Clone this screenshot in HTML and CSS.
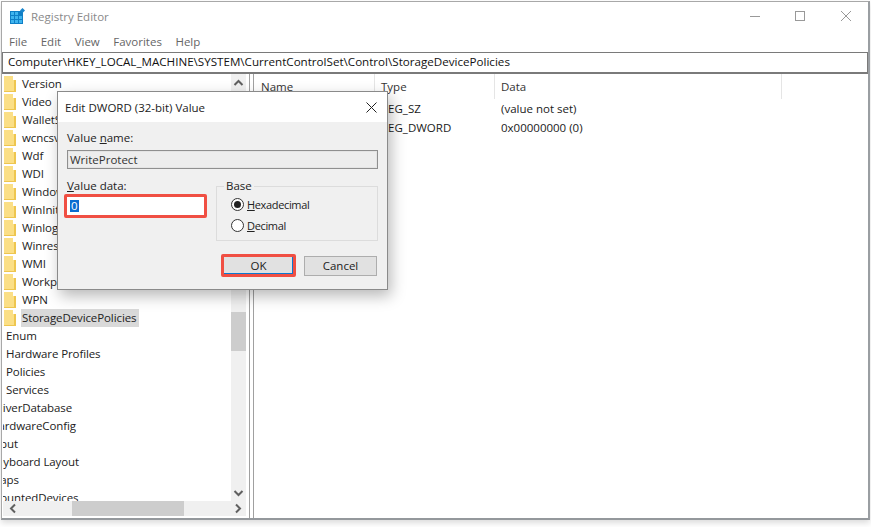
FILE: index.html
```html
<!DOCTYPE html>
<html lang="en">
<head>
<meta charset="utf-8">
<title>Registry Editor</title>
<link rel="stylesheet" href="styles.css">
</head>
<body>
<div class="window">
  <header class="titlebar">
    <svg class="appicon" width="16" height="16" viewBox="0 0 16 16">
      <rect x="0" y="3" width="13" height="13" fill="#0f7fc6"/>
      <g fill="#3fb4ee">
        <rect x="1" y="4" width="3" height="3"/><rect x="5" y="4" width="3" height="3"/>
        <rect x="1" y="8" width="3" height="3"/><rect x="5" y="8" width="3" height="3"/><rect x="9" y="8" width="3" height="3"/>
        <rect x="1" y="12" width="3" height="3"/><rect x="5" y="12" width="3" height="3"/><rect x="9" y="12" width="3" height="3"/>
      </g>
      <path d="M12.5 0l2.5 2.5-2.5 2.5-2.5-2.5z" fill="#1a86cc"/>
    </svg>
    <span class="apptitle">Registry Editor</span>
    <div class="winctrls">
      <svg width="11" height="12" viewBox="0 0 11 12"><path d="M0 6.5h10" stroke="#999" fill="none"/></svg>
      <svg width="11" height="12" viewBox="0 0 11 12"><rect x=".5" y="1.5" width="9" height="9" stroke="#999" fill="none"/></svg>
      <svg width="11" height="12" viewBox="0 0 11 12"><path d="M1 1l10 10M11 1L1 11" stroke="#999" fill="none"/></svg>
    </div>
  </header>
  <nav class="menubar">
    <span>File</span><span>Edit</span><span>View</span><span>Favorites</span><span>Help</span>
  </nav>
  <div class="address">Computer\HKEY_LOCAL_MACHINE\SYSTEM\CurrentControlSet\Control\StorageDevicePolicies</div>
  <main class="panes">
    <section class="tree">
      <div class="tree-scroll">
        <ul class="tree-list">
          <li class="node"><i class="folder"></i><span>Version</span></li>
          <li class="node"><i class="folder"></i><span>Video</span></li>
          <li class="node"><i class="folder"></i><span>WalletService</span></li>
          <li class="node"><i class="folder"></i><span>wcncsvc</span></li>
          <li class="node"><i class="folder"></i><span>Wdf</span></li>
          <li class="node"><i class="folder"></i><span>WDI</span></li>
          <li class="node"><i class="folder"></i><span>Windows</span></li>
          <li class="node"><i class="folder"></i><span>WinInit</span></li>
          <li class="node"><i class="folder"></i><span>Winlogon</span></li>
          <li class="node"><i class="folder"></i><span>Winresume</span></li>
          <li class="node"><i class="folder"></i><span>WMI</span></li>
          <li class="node"><i class="folder"></i><span>WorkplaceJoin</span></li>
          <li class="node"><i class="folder"></i><span>WPN</span></li>
          <li class="node"><i class="folder"></i><span class="selected">StorageDevicePolicies</span></li>
          <li class="plain lvl1">Enum</li>
          <li class="plain lvl1">Hardware Profiles</li>
          <li class="plain lvl1">Policies</li>
          <li class="plain lvl1">Services</li>
          <li class="plain lvl2">DriverDatabase</li>
          <li class="plain lvl2">HardwareConfig</li>
          <li class="plain lvl2">Input</li>
          <li class="plain lvl2">Keyboard Layout</li>
          <li class="plain lvl2">Maps</li>
          <li class="plain lvl2">MountedDevices</li>
        </ul>
        <div class="vscroll">
          <svg class="arrow" width="15" height="17" viewBox="0 0 15 17"><path d="M3.5 11l4-4 4 4" stroke="#606060" stroke-width="2" fill="none"/></svg>
          <div class="vtrack"><div class="vthumb"></div></div>
          <svg class="arrow" width="15" height="17" viewBox="0 0 15 17"><path d="M3.5 7l4 4 4-4" stroke="#606060" stroke-width="2" fill="none"/></svg>
        </div>
      </div>
      <div class="hscroll">
        <svg class="harrow" width="17" height="15" viewBox="0 0 17 15"><path d="M12 3.5l-4 4 4 4" stroke="#606060" stroke-width="2" fill="none"/></svg>
        <div class="htrack"><div class="hthumb"></div></div>
        <svg class="harrow" width="17" height="15" viewBox="0 0 17 15"><path d="M7 3.5l4 4-4 4" stroke="#606060" stroke-width="2" fill="none"/></svg>
      </div>
    </section>
    <section class="values">
      <div class="vhead">
        <span class="col-name">Name</span><span class="col-type">Type</span><span class="col-data">Data</span>
      </div>
      <div class="vrow"><span class="col-name"></span><span class="col-type">REG_SZ</span><span class="col-data">(value not set)</span></div>
      <div class="vrow"><span class="col-name"></span><span class="col-type">REG_DWORD</span><span class="col-data">0x00000000 (0)</span></div>
    </section>
  </main>
</div>

<div class="dialog">
  <div class="dlg-title">
    <span>Edit DWORD (32-bit) Value</span>
    <svg width="11" height="11" viewBox="0 0 11 11"><path d="M.5.5l10 10M10.5.5l-10 10" stroke="#222" fill="none"/></svg>
  </div>
  <div class="dlg-body">
    <label class="lbl">Value <u>n</u>ame:</label>
    <div class="namebox">WriteProtect</div>
    <div class="dlg-mid">
      <div class="datacol">
        <label class="lbl"><u>V</u>alue data:</label>
        <div class="databox"><span class="sel">0</span></div>
      </div>
      <fieldset class="base">
        <legend>Base</legend>
        <div class="radio"><i class="dot on"></i><span><u>H</u>exadecimal</span></div>
        <div class="radio"><i class="dot"></i><span><u>D</u>ecimal</span></div>
      </fieldset>
    </div>
    <div class="dlg-btns">
      <div class="btn ok">OK</div>
      <div class="btn">Cancel</div>
    </div>
  </div>
</div>
</body>
</html>
```

FILE: styles.css
```css
* { box-sizing: border-box; }
html, body { margin: 0; padding: 0; height: 100%; overflow: hidden; background: #fff; }
body { font-family: "Open Sans", "Liberation Sans", sans-serif; font-size: 11.5px; color: #1a1a1a; position: relative; }

.window {
  width: 869px; height: 519px; margin: 1px 0 0 1px;
  border: 1px solid #a8a8a8; border-right: 2px solid #9a9ea2; border-bottom: 2px solid #94989c;
  box-shadow: 0 3px 6px rgba(0,0,0,.14);
  background: #fff; display: flex; flex-direction: column;
}
.titlebar { height: 27px; display: flex; align-items: center; padding: 1px 0 0 8px; flex: none; }
.appicon { flex: none; }
.apptitle { margin-left: 5px; color: #8a8a8a; }
.winctrls { margin-left: auto; display: flex; gap: 34px; padding-right: 17px; align-items: center; }
.menubar { height: 23px; display: flex; gap: 13.5px; padding: 1px 0 0 7px; align-items: center; color: #666; flex: none; }
.address {
  height: 22px; flex: none; border: 1px solid #7a7a7a; border-bottom-width: 2px;
  padding-left: 5px; line-height: 18px; color: #111; white-space: nowrap; font-size: 11.62px;
}
.panes { flex: 1; min-height: 0; display: flex; }
.tree { width: 248px; border-right: 1px solid #a0a0a0; display: flex; flex-direction: column; padding-left: 1px; flex: none; }
.tree-scroll { flex: 1; min-height: 0; display: flex; }
.tree-list { flex: 1; list-style: none; margin: 0; padding: 1px 0 0; overflow: hidden; min-width: 0; letter-spacing: -.1px; }
.node, .plain { height: 18px; line-height: 18px; white-space: nowrap; color: #222; display: flex; align-items: center; }
.folder {
  width: 12px; height: 16px; background: #fbdf86; border-right: 2px solid #eec64f; border-bottom: 1px solid #eec64f;
  margin-left: 1px; flex: none; display: block;
  clip-path: polygon(0 0, 75% 0, 75% 25%, 100% 25%, 100% 100%, 0 100%);
}
.node span { padding: 0 3px 0 1px; margin-left: 5px; height: 18px; }
.node .selected { background: #d9d9d9; }
.lvl1 { padding-left: 3px; }
.plain.lvl2 { margin-left: -13px; }
.vscroll { width: 15px; margin-right: 3px; background: #f0f0f0; display: flex; flex-direction: column; flex: none; }
.arrow { flex: none; }
.vtrack { flex: 1; position: relative; }
.vthumb { position: absolute; left: 0; right: 0; top: 221px; height: 39px; background: #cdcdcd; }
.hscroll { height: 15px; background: #f0f0f0; display: flex; align-items: center; flex: none; margin: 0 3px 2px 0; }
.harrow { flex: none; }
.htrack { flex: 1; position: relative; height: 15px; }
.hthumb { position: absolute; left: 52px; width: 112px; top: 0; bottom: 0; background: #cdcdcd; }
.values { flex: 1; margin-left: 3px; border-left: 1px solid #a0a0a0; min-width: 0; }
.vhead { height: 25px; display: flex; align-items: center; color: #333; }
.vrow { height: 19px; display: flex; align-items: center; color: #1a1a1a; }
.col-name { width: 121px; padding-left: 7px; flex: none; align-self: stretch; display: flex; align-items: center; }
.col-type { width: 120px; padding-left: 6px; flex: none; align-self: stretch; display: flex; align-items: center; }
.col-data { width: 287px; padding-left: 6px; flex: none; align-self: stretch; display: flex; align-items: center; }
.vhead span { border-right: 1px solid #e5e5e5; }

.dialog {
  position: absolute; left: 57px; top: 91px; width: 331px; height: 199px;
  background: #f0f0f0; border: 1px solid #8a8a8a;
  box-shadow: 3px 6px 14px rgba(0,0,0,.28);
  display: flex; flex-direction: column;
}
.dlg-title { height: 30px; background: #fff; display: flex; align-items: center; justify-content: space-between; padding: 0 10px 0 7px; color: #222; flex: none; }
.dlg-body { flex: 1; padding: 7px 9px 0 9px; }
.lbl { display: block; height: 18px; line-height: 18px; color: #222; }
.namebox { height: 19px; margin-top: 3px; border: 1px solid #8f8f8f; outline: 1px solid #e4e4e4; outline-offset: -2px; background: #ededed; line-height: 17px; padding-left: 2px; color: #333; }
.dlg-mid { display: flex; justify-content: space-between; margin-top: 8px; }
.datacol { width: 140px; }
.databox { width: 143px; height: 24px; margin: -1px 0 0 -3px; border: 3px solid #f04f43; border-radius: 2px; background: #fff; padding: 3px 0 0 3px; line-height: 12px; }
.sel { background: #0a6cd0; color: #fff; display: inline-block; padding: 0 1px; height: 12px; line-height: 12px; }
.base { width: 162px; height: 61px; border: 1px solid #dcdcdc; margin: 3px 0 0; padding: 2px 0 0 14px; }
.base legend { padding: 0 2px; margin-left: -7px; line-height: 12px; color: #222; height: 12px; }
.radio { height: 21px; display: flex; align-items: center; gap: 3px; color: #222; font-size: 11px; letter-spacing: -.35px; }
.dot { width: 13px; height: 13px; border: 1px solid #333; border-radius: 50%; background: #fff; display: flex; align-items: center; justify-content: center; flex: none; }
.dot.on::after { content: ""; width: 7px; height: 7px; border-radius: 50%; background: #222; }
.dlg-btns { display: flex; justify-content: flex-end; align-items: center; gap: 8px; margin: 13px 1px 0 0; }
.btn { width: 73px; height: 20px; background: #e1e1e1; border: 1px solid #adadad; text-align: center; line-height: 18px; color: #222; }
.btn.ok { width: 75px; height: 23px; background: #e1e1e1; border: 3px solid #f04f43; border-radius: 2px; line-height: 17px; box-shadow: inset -1px -1px 0 #0a78d0; }
```
